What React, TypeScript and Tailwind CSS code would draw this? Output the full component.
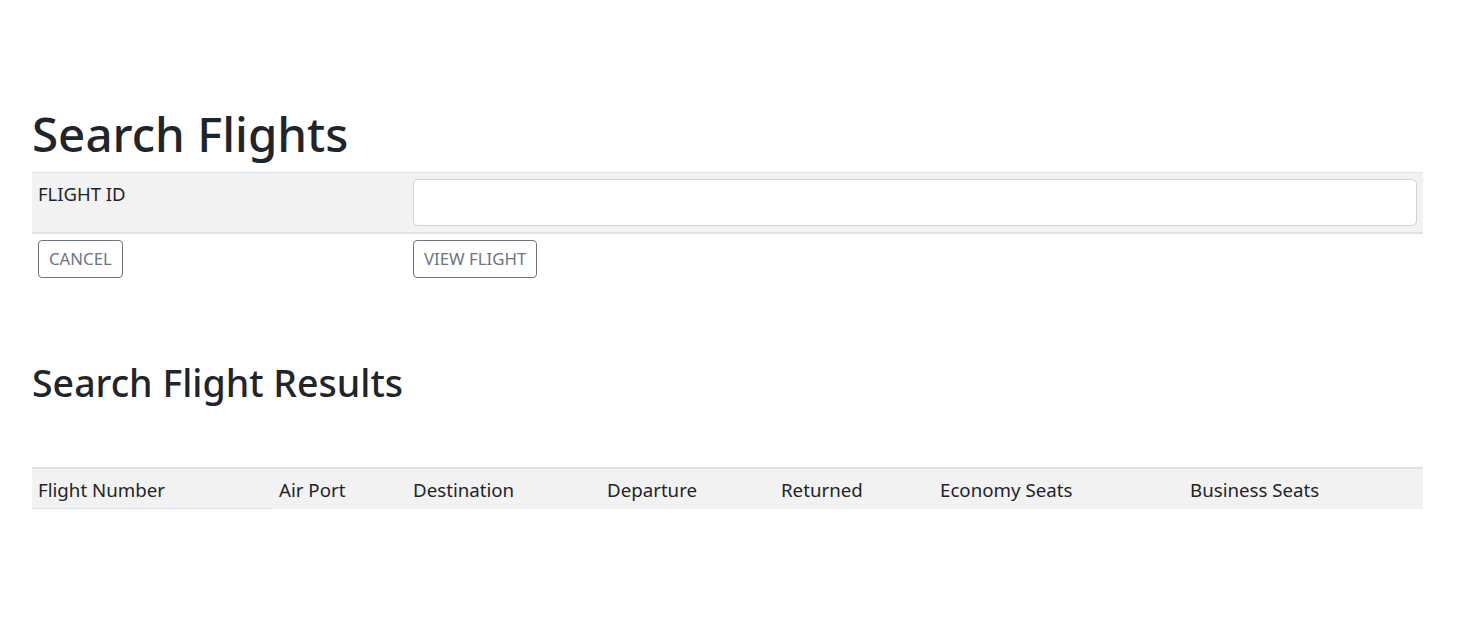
import React from "react";

export default function App() {
  const cols = [
    { label: "Flight Number", w: "w-[241px]" },
    { label: "Air Port", w: "w-[134px]" },
    { label: "Destination", w: "w-[194px]" },
    { label: "Departure", w: "w-[174px]" },
    { label: "Returned", w: "w-[159px]" },
    { label: "Economy Seats", w: "w-[250px]" },
    { label: "Business Seats", w: "flex-1" },
  ];
  return (
    <div className="min-h-[627px] bg-white text-[#212529] font-['Noto_Sans','Open_Sans',sans-serif]">
      <div className="px-8 pt-[106px]">
        <h1 className="text-[47.5px] leading-[56px] font-medium mb-[10px]">Search Flights</h1>
        <div className="w-[1391px]">
          <div className="flex bg-[#f2f2f2] border-t border-[#dee2e6] border-b-2">
            <div className="w-[375px] px-[6px] pt-[9px] text-[18.5px] leading-6">FLIGHT ID</div>
            <div className="flex-1 py-[6px] pl-[6px] pr-[6px]">
              <input className="w-full h-[47px] bg-white border border-[#ced4da] rounded-[5px] px-4 outline-none" />
            </div>
          </div>
          <div className="flex py-[6px]">
            <div className="w-[375px] px-[6px]">
              <button className="h-[38px] px-[10px] border border-[#6c757d] rounded-[4px] text-[#6c757d] text-[16.8px]">CANCEL</button>
            </div>
            <div className="flex-1 px-[6px]">
              <button className="h-[38px] px-[10px] border border-[#6c757d] rounded-[4px] text-[#6c757d] text-[16.8px]">VIEW FLIGHT</button>
            </div>
          </div>
        </div>
        <h2 className="text-[37.5px] leading-[46px] font-medium mt-[76px]">Search Flight Results</h2>
        <div className="w-[1391px] mt-[61px] border-t-2 border-[#dee2e6] flex bg-[#f2f2f2]">
          {cols.map((c, i) => (
            <div
              key={c.label}
              className={`${c.w} px-[6px] pt-[8px] pb-[6px] text-[18.7px] leading-[25px] ${i === 0 ? "border-b border-[#dee2e6]" : ""}`}
            >
              {c.label}
            </div>
          ))}
        </div>
      </div>
    </div>
  );
}
